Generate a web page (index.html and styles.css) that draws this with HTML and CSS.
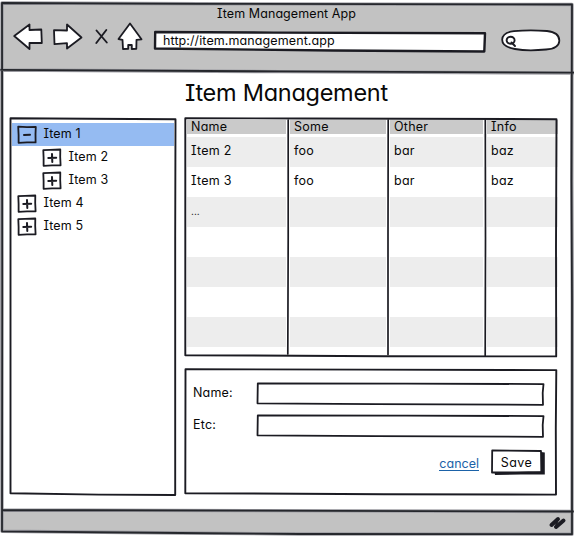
FILE: index.html
```html
<!DOCTYPE html>
<html lang="en">
<head>
<meta charset="utf-8">
<title>Item Management App</title>
<link rel="stylesheet" href="styles.css">
</head>
<body>
<svg width="0" height="0" class="defs" aria-hidden="true">
  <symbol id="plus" viewBox="0 0 20 19">
    <path class="ink box" d="M1.3 2.2 8 1.8 18.3 1.5 18.2 9 18.6 17.4 10 17.4 1.6 17.8 1.6 10Z"/><path class="ink cross" d="M10 6 10.3 14 M6.3 10 14.2 9.8"/>
  </symbol>
  <symbol id="minus" viewBox="0 0 20 19">
    <path class="ink box" d="M1.2 1.7 10 2.2 18.8 2 18.5 9 18.6 17.4 10 17.3 1.6 17.8 1.6 10Z"/><path class="ink cross" d="M7 10 13 9.8"/>
  </symbol>
</svg>
<div class="window">
  <header class="chrome">
    <div class="window-title"><span>Item Management App</span></div>
    <div class="toolbar">
      <svg class="back" width="31" height="28" viewBox="0 0 31 28"><path class="shape" d="M1.2 13 16.5 1.5V7L28.3 6.5 28.8 20 16.5 19.8V26Z"/></svg>
      <svg class="forward" width="31" height="28" viewBox="0 0 31 28"><path class="shape" d="M29.5 14.5 15 1.5V7.5L2 7.2 2.5 21.2 15 20.2V25.5Z"/></svg>
      <svg class="stop" width="15" height="17" viewBox="0 0 15 17"><path class="ink" d="M2.5 1.5 12.8 13.5 M12.3 1 2.3 14"/></svg>
      <svg class="home" width="26" height="29" viewBox="0 0 26 29"><path class="shape" d="M13 1.5 1.5 17 5.5 17.8 6 27 11.2 26.8V23H14.8V27L19.3 26.8 19.5 17.8 24.5 17.3Z"/></svg>
      <div class="address">
        <svg class="frame" width="333" height="23" viewBox="0 0 333 23"><path class="shape thick" d="M1.2 2 120 2.6 331 3.3 330.3 21.5 180 20.5 1 18.5Z"/></svg>
        <span>http://item.management.app</span>
      </div>
      <svg class="search" width="60" height="23" viewBox="0 0 60 23"><path class="shape" d="M13 2.2C25 1 39 1.5 46 2 55 3 58.5 7 58.3 12 58 17 53 20 45 20.5 35 21.5 22 21.5 14 20 5 18.5 1 15 1.2 10.5 1.5 6 6 3 13 2.2Z"/><ellipse class="ink" cx="9.6" cy="11.2" rx="4" ry="3.5"/><path class="ink" d="M10.5 13.5 14 17"/></svg>
    </div>
  </header>
  <h1><span>Item Management</span></h1>
  <main>
    <nav class="tree">
      <svg class="frame" width="168" height="381" viewBox="0 0 168 381"><path class="ink" d="M1.5 1.2 80 1.7 166.5 2.2 166.2 120 166.2 378 90 377.6 1.5 376.2 1.5 200Z"/></svg>
      <div class="node selected"><svg width="20" height="19"><use href="#minus"/></svg><span>Item 1</span></div>
      <div class="node child"><svg width="20" height="19"><use href="#plus"/></svg><span>Item 2</span></div>
      <div class="node child"><svg width="20" height="19"><use href="#plus"/></svg><span>Item 3</span></div>
      <div class="node"><svg width="20" height="19"><use href="#plus"/></svg><span>Item 4</span></div>
      <div class="node"><svg width="20" height="19"><use href="#plus"/></svg><span>Item 5</span></div>
    </nav>
    <div class="content">
      <section class="grid">
        <svg class="frame" width="374" height="241" viewBox="0 0 374 241"><path class="ink" d="M1.3 1.2 120 1.5 372.5 2.2 372 130 372.2 239.4 200 239.2 1.3 238.2 1.3 100Z"/><path class="ink thin" d="M104.2 3 104.2 120 103.8 237 M204.2 3 204 120 204 237.5 M301.3 3 301.5 120 301.2 238.5"/></svg>
        <div class="row head"><span>Name</span><span>Some</span><span>Other</span><span>Info</span></div>
        <div class="row"><span>Item 2</span><span>foo</span><span>bar</span><span>baz</span></div>
        <div class="row"><span>Item 3</span><span>foo</span><span>bar</span><span>baz</span></div>
        <div class="row"><span class="more">...</span><span></span><span></span><span></span></div>
        <div class="row"><span></span><span></span><span></span><span></span></div>
        <div class="row"><span></span><span></span><span></span><span></span></div>
        <div class="row"><span></span><span></span><span></span><span></span></div>
        <div class="row"><span></span><span></span><span></span><span></span></div>
      </section>
      <section class="form">
        <svg class="frame" width="374" height="128" viewBox="0 0 374 128"><path class="ink" d="M1.5 1.3 180 1.6 372.3 2.1 371.8 60 372 126.6 200 126.2 1.3 125.2Z"/></svg>
        <div class="field"><span>Name:</span><svg width="289" height="24" viewBox="0 0 289 24"><path class="shape" d="M1.8 2.3 150 2.6 287.5 3.1 286.7 12 287 23.8 120 23.2 1.5 22.3Z"/></svg></div>
        <div class="field"><span>Etc:</span><svg width="289" height="24" viewBox="0 0 289 24"><path class="shape" d="M1.8 2.3 150 2.6 287.5 3.1 286.7 12 287 23.8 120 23.2 1.5 22.3Z"/></svg></div>
        <div class="actions">
          <a class="cancel">cancel</a>
          <div class="save"><svg class="frame" width="54" height="27" viewBox="0 0 54 27"><path class="shadow" d="M3.5 23 50 22V3L53.8 3.5V25.5L30 25.5 4 26Z"/><path class="shape" d="M1.2 1.4 50 2 50.3 22.8 25 23.5 1 23.5Z"/></svg><span>Save</span></div>
        </div>
      </section>
    </div>
  </main>
  <footer>
    <svg width="18" height="16" viewBox="0 0 18 16"><path class="grip" d="M2.5 10 9 4 M7 12 14.5 5.5"/><path class="ink" d="M9 4 6.5 12"/></svg>
  </footer>
  <svg class="frame outline" width="574" height="536" viewBox="0 0 574 536"><path class="soft" d="M2 3 200 3.8 572 4.5 571.8 180 572.3 300 572 534.2 300 534 180 533 2 531.3 1.8 300Z M1 70 280 71.6 574 73 M2 510 250 510.6 573 511.5"/><path class="border" d="M2 3 200 3.8 572 4.5 571.5 180 572 300 572 534.2 300 534 180 533 2 531.3 2.3 300Z M1 69.8 280 71.4 574 72.6 M2 510 250 510.6 573 511.5"/></svg>
</div>
</body>
</html>
```

FILE: styles.css
```css
* { box-sizing: border-box; }
body {
  margin: 0;
  background: #fff;
  color: #080808;
  font: 12.5px/18px Inter, "Open Sans", sans-serif;
  font-feature-settings: "cv08", "cv11", "calt" 0;
}
.defs { position: absolute; }
svg { display: block; flex: none; overflow: visible; }
.window {
  position: relative;
  display: flex;
  flex-direction: column;
  width: 574px;
  height: 536px;
  overflow: hidden;
}
.frame { position: absolute; left: 0; top: 0; pointer-events: none; }
.ink, .shape, .border, .soft, .grip {
  fill: none;
  stroke: #1b1b22;
  stroke-width: 1.9;
  stroke-linejoin: round;
  stroke-linecap: round;
}
.shape { fill: #fff; stroke-width: 1.8; }
.box { stroke-width: 1.8; }
.cross { stroke-width: 2; }
.thin { stroke-width: 1.7; }
.thick { stroke-width: 2.4; }
.border { stroke: #25272c; stroke-width: 1.8; }
.soft { stroke: #9a9aa0; stroke-width: 3.4; }
.grip { stroke-width: 4; }
.shadow { fill: #1b1b22; }

.chrome { height: 68px; margin: 3px 2px 0; background: #c2c2c2; }
.window-title { height: 21px; padding-left: 215px; line-height: 21px; letter-spacing: 0.08px; white-space: nowrap; }
.toolbar { display: flex; align-items: flex-start; padding-left: 11px; }
.forward { margin-left: 8px; }
.stop { margin: 5px 0 0 11px; }
.home { margin-left: 8px; margin-top: -2px; }
.back, .forward { margin-top: -1px; }
.address { position: relative; width: 333px; height: 23px; margin: 6px 0 0 11px; padding-left: 9px; line-height: 21px; letter-spacing: 0.1px; }
.address span { position: relative; }
.search { margin: 5px 0 0 14px; }

h1 { margin: 0; height: 46px; padding-left: 185px; font-size: 23.5px; line-height: 43px; font-weight: 400; letter-spacing: -0.27px; white-space: nowrap; }
main { display: flex; gap: 8px; height: 393px; padding-left: 9px; }
.tree { position: relative; width: 167px; height: 380px; padding: 6px 2px 0 3px; }
.node { display: flex; height: 23px; padding-left: 5px; line-height: 21px; }
.node svg { margin-top: 2px; }
.node span { position: relative; padding-left: 6.5px; letter-spacing: 0.1px; }
.child { padding-left: 30px; }
.selected { background: #95bbf2; }

.content { display: flex; flex-direction: column; gap: 11px; width: 374px; }
.grid { position: relative; height: 240px; padding: 3px 0 0 3px; }
.row { display: grid; grid-template-columns: 99px 96px 93px 71px; gap: 4px; height: 30px; line-height: 28px; }
.row span { padding-left: 4px; letter-spacing: 0.25px; }
.row:nth-of-type(even) span { background: #ededed; }
.row.head { height: 14px; line-height: 13px; margin-bottom: 3px; }
.row.head span { background: #cacaca; }
.row .more { font-size: 10px; line-height: 29px; letter-spacing: 0; }
.form { position: relative; height: 127px; padding: 13px 0 0 9px; }
.field { display: flex; height: 32px; line-height: 23px; }
.field span { width: 63px; letter-spacing: 0.2px; }
.actions { display: flex; justify-content: flex-end; padding: 4px 13px 0 0; }
.cancel { margin: 6px 12px 0 0; height: 16px; border-bottom: 1px solid #1b62a8; color: #1b62a8; line-height: 18px; }
.save { position: relative; width: 54px; height: 27px; line-height: 27px; text-align: center; padding-right: 3px; letter-spacing: 0.5px; }
.save span { position: relative; }
footer { display: flex; justify-content: flex-end; height: 23px; margin: 0 2px; padding: 5px 5px 0 0; background: #c2c2c2; }
```
